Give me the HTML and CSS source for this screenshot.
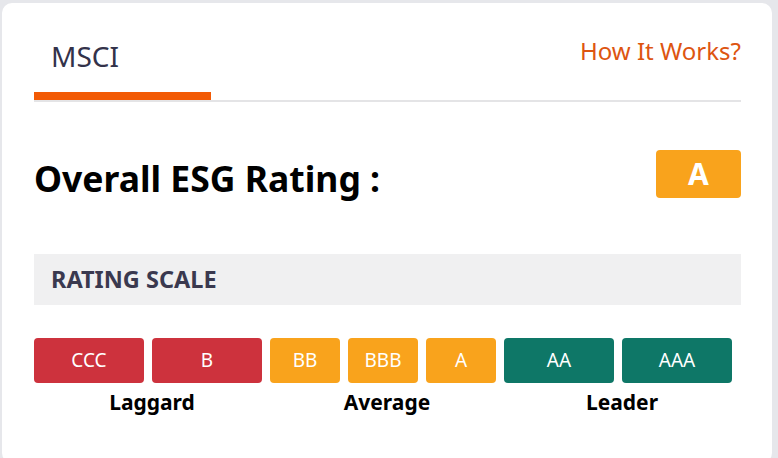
FILE: index.html
```html
<!DOCTYPE html>
<html lang="en">
<head>
    <meta charset="UTF-8">
    <meta name="viewport" content="width=device-width, initial-scale=1.0">
    <title>ESG Rating</title>
    <link rel="stylesheet" href="styles.css">
</head>
<body>
    <div class="card">
        <div class="tabs">
            <div class="tab active">MSCI</div>
            <a class="how" href="#">How It Works?</a>
        </div>
        <div class="overall">
            <h2>Overall ESG Rating :</h2>
            <span class="badge">A</span>
        </div>
        <div class="scale-title">RATING SCALE</div>
        <div class="scale">
            <div class="group">
                <div class="boxes">
                    <span class="box red wide">CCC</span>
                    <span class="box red wide">B</span>
                </div>
                <div class="label">Laggard</div>
            </div>
            <div class="group">
                <div class="boxes">
                    <span class="box amber">BB</span>
                    <span class="box amber">BBB</span>
                    <span class="box amber">A</span>
                </div>
                <div class="label">Average</div>
            </div>
            <div class="group">
                <div class="boxes">
                    <span class="box green wide">AA</span>
                    <span class="box green wide">AAA</span>
                </div>
                <div class="label">Leader</div>
            </div>
        </div>
    </div>
</body>
</html>
```
FILE: styles.css
```css
body {
    margin: 0;
    padding: 3px 6px 0 2px;
    background: #e6e7eb;
    font-family: "Noto Sans", "Open Sans", sans-serif;
}
.card {
    background: #fff;
    border-radius: 10px;
    padding: 0 31px 60px 32px;
    height: 460px;
    box-sizing: border-box;
}
.tabs {
    display: flex;
    justify-content: space-between;
    align-items: flex-start;
    border-bottom: 2px solid #e4e4e6;
}
.tab {
    width: 160px;
    padding: 34px 0 17px 17px;
    font-size: 28px;
    line-height: 38px;
    color: #33324a;
}
.tab.active {
    border-bottom: 8px solid #f25a05;
}
.how {
    padding-top: 33px;
    font-size: 24px;
    line-height: 30px;
    color: #dd5511;
    text-decoration: none;
}
.overall {
    display: flex;
    justify-content: space-between;
    align-items: flex-start;
    margin-top: 48px;
}
.overall h2 {
    margin: 0;
    font-size: 35.5px;
    line-height: 56px;
    font-weight: 700;
    color: #000;
}
.badge {
    width: 85px;
    height: 48px;
    line-height: 48px;
    text-align: center;
    background: #f9a31c;
    color: #fff;
    font-size: 30px;
    font-weight: 700;
    border-radius: 4px;
}
.scale-title {
    margin-top: 48px;
    height: 51px;
    line-height: 51px;
    padding-left: 17px;
    background: #f0f0f1;
    font-size: 23.5px;
    font-weight: 700;
    color: #3a394f;
}
.scale {
    display: flex;
    margin-top: 33px;
}
.boxes {
    display: flex;
}
.box {
    width: 70px;
    height: 45px;
    line-height: 45px;
    margin-right: 8px;
    text-align: center;
    color: #fff;
    font-size: 19px;
    border-radius: 4px;
}
.box.wide {
    width: 110px;
}
.red {
    background: #cd323d;
}
.amber {
    background: #f9a31c;
}
.green {
    background: #0e7767;
}
.label {
    text-align: center;
    font-size: 21px;
    font-weight: 700;
    line-height: 28px;
    margin-top: 5px;
}
```
